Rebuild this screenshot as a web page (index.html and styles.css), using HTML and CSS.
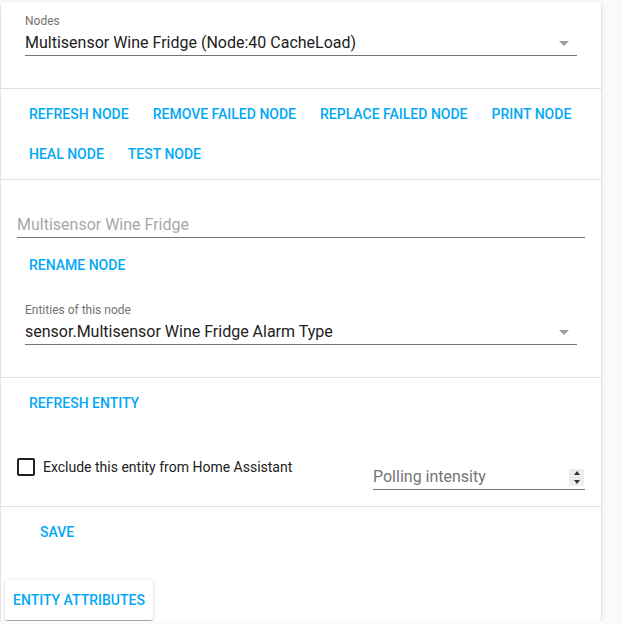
FILE: index.html
```html
<!DOCTYPE html>
<html>
<head>
<meta charset="utf-8">
<link rel="stylesheet" href="styles.css">
</head>
<body>
<div class="card">
  <div class="sec-dropdown">
    <div class="field-label">Nodes</div>
    <div class="field-value">
      <span>Multisensor Wine Fridge (Node:40 CacheLoad)</span>
      <span class="arrow"></span>
    </div>
  </div>

  <div class="actions divider">
    <span class="btn">Refresh Node</span>
    <span class="btn">Remove Failed Node</span>
    <span class="btn">Replace Failed Node</span>
    <span class="btn">Print Node</span>
    <span class="btn">Heal Node</span>
    <span class="btn">Test Node</span>
  </div>

  <div class="sec-rename divider">
    <div class="text-input"><span class="placeholder">Multisensor Wine Fridge</span></div>
    <div class="actions-inline">
      <span class="btn">Rename Node</span>
    </div>
    <div class="entity-dropdown">
      <div class="field-label">Entities of this node</div>
      <div class="field-value">
        <span>sensor.Multisensor Wine Fridge Alarm Type</span>
        <span class="arrow"></span>
      </div>
    </div>
  </div>

  <div class="sec-entity divider">
    <div class="actions-inline">
      <span class="btn">Refresh Entity</span>
    </div>
    <div class="option-row">
      <label class="checkbox">
        <span class="box"></span>
        <span class="check-label">Exclude this entity from Home Assistant</span>
      </label>
      <div class="polling">
        <span class="polling-text">Polling intensity</span>
        <span class="spinner">
          <span class="spin-up"></span>
          <span class="spin-down"></span>
        </span>
      </div>
    </div>
  </div>

  <div class="sec-save divider">
    <span class="btn">Save</span>
    <div class="attr-card">
      <span class="btn">Entity Attributes</span>
    </div>
  </div>
</div>
</body>
</html>
```

FILE: styles.css
```css
html, body {
  margin: 0;
  padding: 0;
  background: #fafafa;
  font-family: Roboto, "Noto Sans", sans-serif;
  color: #212121;
}

.card {
  margin: 2px 0 0 1px;
  width: 600px;
  background: #fff;
  border-radius: 2px;
  box-shadow: 0 2px 2px rgba(0,0,0,.14), 0 1px 5px rgba(0,0,0,.12), 0 3px 1px -2px rgba(0,0,0,.2);
  padding-bottom: 1px;
}

.divider {
  border-top: 1px solid #e0e0e0;
}

.sec-dropdown {
  padding: 11px 24px 32px;
}

.field-label {
  font-size: 12px;
  line-height: 16px;
  color: #737373;
  margin-bottom: 2px;
}

.field-value {
  display: flex;
  justify-content: space-between;
  align-items: center;
  font-size: 16px;
  line-height: 24px;
  border-bottom: 1px solid #737373;
}

.arrow {
  width: 0;
  height: 0;
  border-left: 5px solid transparent;
  border-right: 5px solid transparent;
  border-top: 5px solid #9e9e9e;
  margin-right: 8px;
}

.actions {
  display: flex;
  flex-wrap: wrap;
  padding: 5px 16px;
}

.btn {
  display: inline-block;
  margin: 0 4px;
  padding: 10px 8px;
  font-size: 14px;
  line-height: 20px;
  font-weight: 500;
  color: #03a9f4;
  text-transform: uppercase;
}

.sec-rename {
  padding: 33px 16px 32px;
}

.text-input {
  font-size: 16px;
  line-height: 24px;
  border-bottom: 1px solid #737373;
}

.placeholder {
  color: #a8a8a8;
}

.actions-inline {
  display: flex;
}

.sec-rename .actions-inline {
  margin-top: 7px;
}

.entity-dropdown {
  padding: 17px 8px 0;
}

.sec-entity {
  padding: 5px 16px 16px;
}

.option-row {
  display: flex;
  justify-content: space-between;
  align-items: flex-start;
  margin-top: 35px;
}

.checkbox {
  display: flex;
  align-items: center;
}

.box {
  box-sizing: border-box;
  width: 18px;
  height: 18px;
  border: 2px solid #212121;
  border-radius: 2px;
}

.check-label {
  margin-left: 8px;
  font-size: 14px;
  line-height: 18px;
}

.polling {
  width: 212px;
  margin-top: 7px;
  display: flex;
  justify-content: space-between;
  align-items: center;
  font-size: 16px;
  line-height: 24px;
  border-bottom: 1px solid #737373;
}

.polling-text {
  color: #757575;
}

.spinner {
  display: flex;
  flex-direction: column;
  width: 15px;
  height: 17px;
  margin-right: 1px;
  background: #e6e6e6;
  gap: 1px;
}

.spin-up, .spin-down {
  flex: 1;
  display: flex;
  align-items: center;
  justify-content: center;
  background: #ededed;
}

.spin-up::before {
  content: "";
  border-left: 3px solid transparent;
  border-right: 3px solid transparent;
  border-bottom: 4px solid #333;
}

.spin-down::before {
  content: "";
  border-left: 3px solid transparent;
  border-right: 3px solid transparent;
  border-top: 4px solid #333;
}

.sec-save {
  padding: 5px 0 0 27px;
}

.attr-card {
  display: table;
  margin: 28px 0 0 -23px;
  background: #fff;
  border-radius: 2px;
  box-shadow: 0 2px 2px rgba(0,0,0,.14), 0 1px 5px rgba(0,0,0,.12), 0 3px 1px -2px rgba(0,0,0,.2);
}

.attr-card .btn {
  margin: 0;
}
```
